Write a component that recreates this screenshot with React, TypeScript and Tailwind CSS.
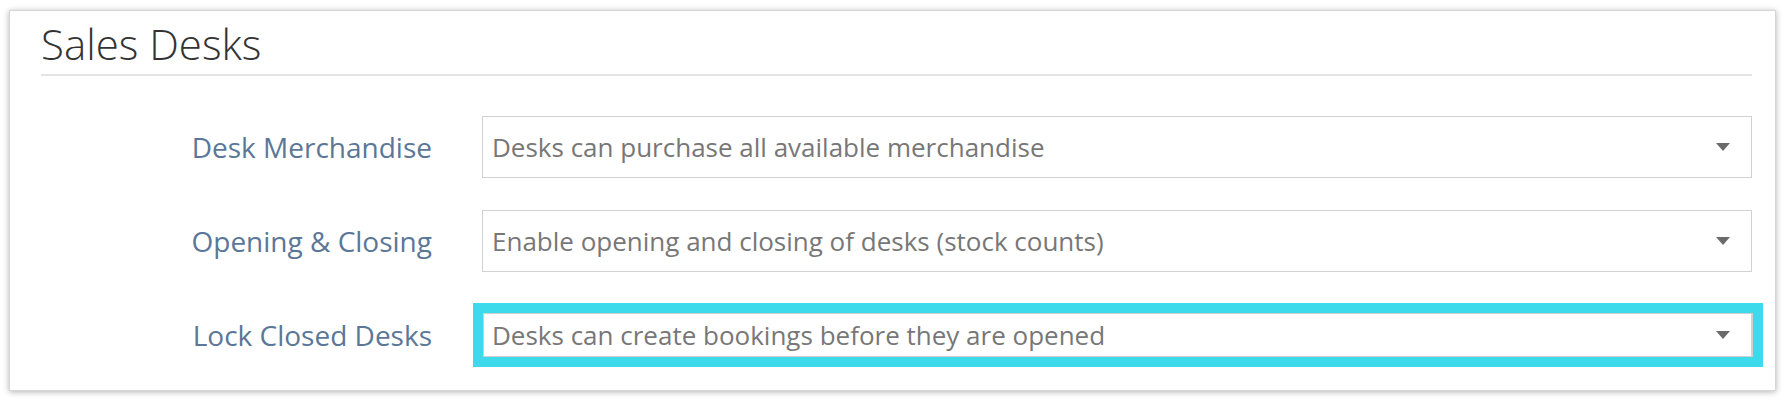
import { ReactNode } from "react";

const rows = [
  { label: "Desk Merchandise", value: "Desks can purchase all available merchandise" },
  { label: "Opening & Closing", value: "Enable opening and closing of desks (stock counts)" },
  { label: "Lock Closed Desks", value: "Desks can create bookings before they are opened", highlight: true },
];

function Caret() {
  return (
    <svg viewBox="0 0 14 8" className="h-[8px] w-[14px] shrink-0" fill="#6b6b6b">
      <path d="M0 0h14L7 8z" />
    </svg>
  );
}

function SelectBox({ value, children }: { value: string; children?: ReactNode }) {
  return (
    <div className="relative flex-1">
      <div className="flex h-[62px] items-center justify-between border border-[#d2d2d2] bg-white pl-[9px] pr-[21px]">
        <span className="text-[26px] text-[#777777]">{value}</span>
        <Caret />
      </div>
      {children}
    </div>
  );
}

export default function App() {
  return (
    <div className="h-[402px] bg-white pl-[9px] pr-[10px] pt-[10px] font-['Open_Sans',sans-serif]">
      <section className="border border-[#d6d6d6] bg-white pb-[24px] pl-[31px] pr-[23px] pt-[8px] shadow-[0_1px_6px_rgba(0,0,0,0.3)]">
        <h2 className="text-[42px] font-light leading-[1.2] text-[#333333]">Sales Desks</h2>
        <div className="mt-[5px] h-[2px] bg-[#e4e4e4]" />

        <div className="mt-[40px] flex flex-col gap-[32px]">
          {rows.map((r) => (
            <div key={r.label} className="flex items-center">
              <label className="w-[391px] text-right text-[28px] text-[#5b7798]">{r.label}</label>
              <div className="ml-[50px] flex flex-1">
                <SelectBox value={r.value}>
                  {r.highlight && (
                    <div className="pointer-events-none absolute -bottom-px -left-[9px] -right-[11px] -top-px border-[10px] border-[#3ddaec] shadow-[inset_0_0_0_1px_#cfcfcf]" />
                  )}
                </SelectBox>
              </div>
            </div>
          ))}
        </div>
      </section>
    </div>
  );
}
